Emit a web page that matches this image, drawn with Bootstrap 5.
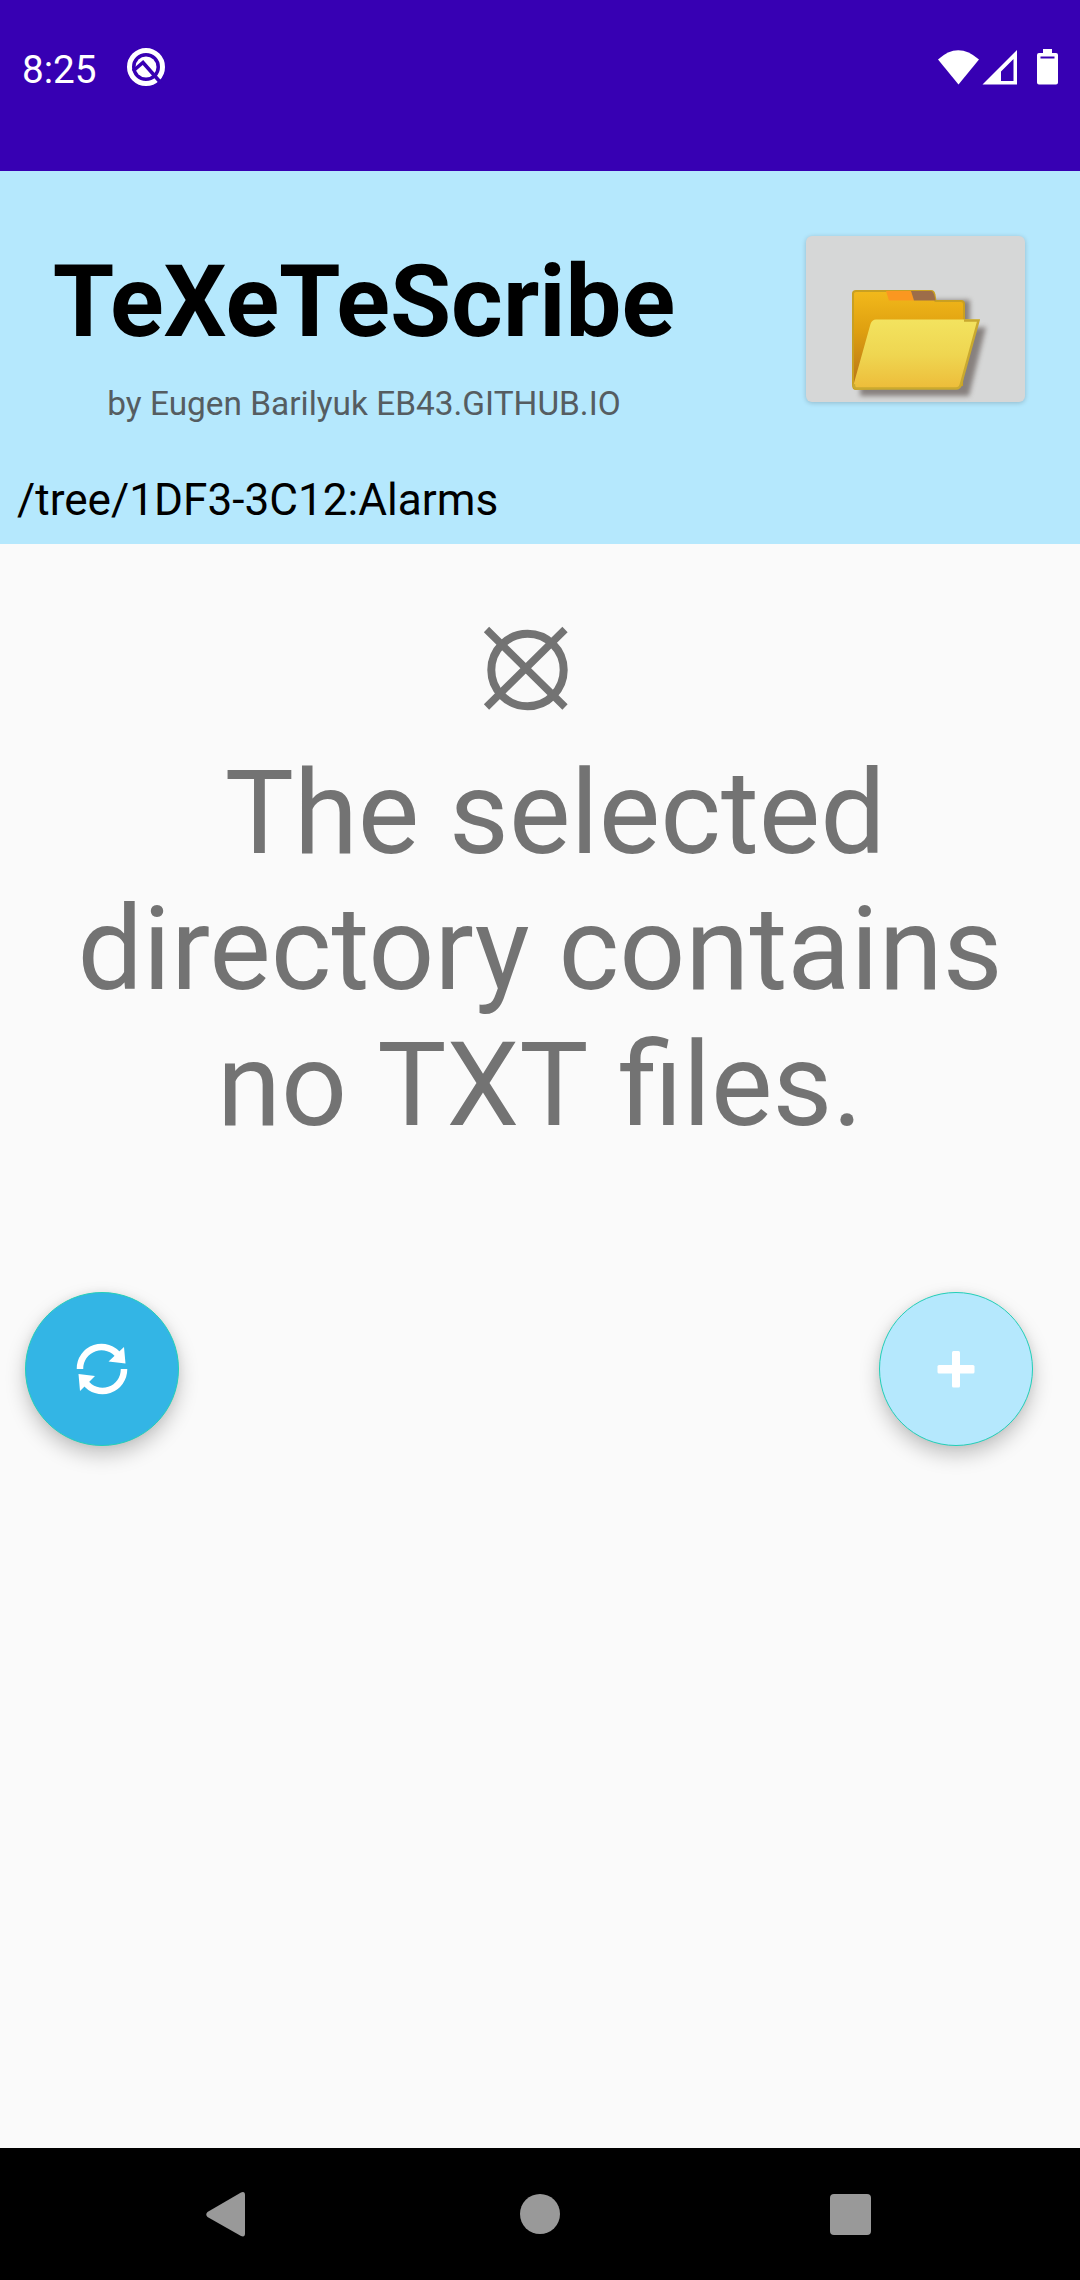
<!DOCTYPE html>
<html lang="en">
<head>
<meta charset="utf-8">
<meta name="viewport" content="width=device-width, initial-scale=1">
<title>TeXeTeScribe</title>
<link href="https://cdn.jsdelivr.net/npm/bootstrap@5.3.0/dist/css/bootstrap.min.css" rel="stylesheet">
<style>
  body { font-family: Roboto, "Noto Sans", sans-serif; background: #fafafa; color: #000; height: 2280px; overflow: hidden; }
  svg { display: block; flex: none; }
  .status-bar { height: 171px; background: #3700b3; color: #fff; padding: 35px 20px 0 22px; }
  .status-row { height: 64px; }
  .clock { font-size: 38.7px; line-height: 64px; padding-top: 5px; }
  .debug-icon { margin-left: 28px; margin-top: 2px; }
  .app-header { height: 373px; background: #b5e8fd; padding: 64px 55px 0 17px; }
  .brand { width: 694px; }
  .app-title { font-size: 99.4px; font-weight: 700; line-height: 116px; margin: 9px 0 0; white-space: nowrap; }
  .app-byline { font-size: 33.4px; line-height: 44px; margin: 22px 0 0; color: #555d61; white-space: nowrap; }
  .tree-path { font-size: 44.15px; line-height: 52px; margin: 48px 0 0; white-space: nowrap; }
  .folder-btn { width: 219px; height: 166px; margin-top: 1px; border: 0; border-radius: 6px; background: #d6d7d7; box-shadow: 0 1px 5px rgba(0,0,0,.2); }
  .empty-msg { font-size: 116px; line-height: 136px; color: #737373; white-space: pre; }
  .msg-first { padding-left: 3px; word-spacing: 1px; }
  .msg-last { word-spacing: 3.5px; }
  .fab { width: 154px; height: 154px; border-radius: 50%; border: 1px solid #22cfb8; box-shadow: 0 9px 20px rgba(0,0,0,.22), 0 0 8px rgba(0,0,0,.06); }
  .fab-refresh { background: #33b5e5; }
  .fab-add { background: #b5e8fd; }
  .fab-add svg { margin: -1px 0 0 -1px; }
  .fab-row { padding: 0 47px 0 25px; margin-top: 139px; }
  .nav-keys { height: 132px; background: #000; }
</style>
<script src="https://cdn.jsdelivr.net/npm/bootstrap@5.3.0/dist/js/bootstrap.bundle.min.js"></script>
</head>
<body class="d-flex flex-column">
<header class="status-bar">
  <div class="status-row d-flex align-items-center justify-content-between">
    <div class="d-flex align-items-center">
      <span class="clock">8:25</span>
      <svg class="debug-icon" width="42" height="42" viewBox="0 0 42 42">
        <circle cx="21" cy="20" r="16.500" fill="none" stroke="#fff" stroke-width="5"/>
        <circle cx="21" cy="20" r="10.500" fill="#fff"/>
        <path d="M8 24 18 15.500 36 36" fill="none" stroke="#3700b3" stroke-width="3.600"/>
      </svg>
    </div>
    <svg width="122" height="36" viewBox="938 49 122 36" fill="#fff">
      <path d="M938 59.500Q958 41 979 59.500L958.500 84.500Z"/>
      <path fill-rule="evenodd" d="M982.500 84.500 1017 50V84.500ZM1001 71.500V81H1013.500V59Z"/>
      <path fill-rule="evenodd" d="M1043 49h9v4h4q2 0 2 2v27.500q0 2-2 2h-17q-2 0-2-2V55q0-2 2-2h4ZM1040.500 56.500v2h14v-2Z"/>
    </svg>
  </div>
</header>

<section class="app-header">
  <div class="d-flex justify-content-between align-items-start">
    <div class="brand text-center">
      <h1 class="app-title">TeXeTeScribe</h1>
      <p class="app-byline">by Eugen Barilyuk EB43.GITHUB.IO</p>
    </div>
    <button class="folder-btn p-0" type="button" aria-label="Choose folder">
      <svg width="219" height="166" viewBox="806 236 219 166">
        <defs>
          <linearGradient id="fback" x1="0" y1="0" x2="0" y2="1"><stop offset="0" stop-color="#f2b91b"/><stop offset=".4" stop-color="#dfa010"/><stop offset="1" stop-color="#b5721a"/></linearGradient>
          <linearGradient id="ffront" x1="0" y1="0" x2="0" y2="1"><stop offset="0" stop-color="#f3e35f"/><stop offset=".5" stop-color="#efd651"/><stop offset="1" stop-color="#edbc39"/></linearGradient>
          <filter id="soft" x="-20%" y="-20%" width="140%" height="140%"><feGaussianBlur stdDeviation="2.500"/></filter>
        </defs>
        <path d="M862 300H970V328L986 327 969 396H860Z" fill="#5d5250" opacity=".65" filter="url(#soft)"/>
        <path d="M853 293.500Q853 291 856 291H931Q934 291 934.500 295L935.500 301H961Q964 301 964 304V322L962 385 856 389Q853 389 853 385Z" fill="url(#fback)" stroke="#c9a021" stroke-width="2"/>
        <path d="M886 291H911L914 300.500H889Z" fill="#fb9720"/>
        <path d="M911 291H931Q934 291 935.500 300.500H914Z" fill="#9d6d49"/>
        <path d="M870.500 324Q872 319.500 876 319.500H979L961 385Q960 389 956 389H857Q852.500 388 854 383Z" fill="url(#ffront)"/>
        <path d="M964 320.500H978.500L961 384Q960 388.500 956 388.500H857Q853.500 388.500 854 384" fill="none" stroke="#c9a92f" stroke-width="2.500"/>
      </svg>
    </button>
  </div>
  <p class="tree-path">/tree/1DF3-3C12:Alarms</p>
</section>

<main class="flex-grow-1 d-flex flex-column">
  <svg width="1080" height="201" viewBox="0 544 1080 201" fill="none" stroke="#737373">
    <circle cx="527.500" cy="670" r="36.200" stroke-width="8"/>
    <path d="M486.500 629.500 565 707M565 629.500 486.500 707" stroke-width="7.500"/>
  </svg>
  <div class="empty-msg text-center"><span class="msg-first"> The selected</span>
directory contains
<span class="msg-last">no TXT files.</span></div>
  <div class="fab-row d-flex justify-content-between">
    <button class="fab fab-refresh p-0 d-flex align-items-center justify-content-center" type="button" aria-label="Refresh">
      <svg width="52" height="52" viewBox="76 1343 52 52" fill="none" stroke="#fff" stroke-width="6.500">
        <path d="M80 1369A21.500 21.500 0 0 1 119 1356M124 1369A21.500 21.500 0 0 1 85 1382"/>
        <path fill="#fff" stroke="none" d="M124 1347 125.500 1363.500 108.500 1361.500ZM78.500 1374 95 1376 80 1391Z"/>
      </svg>
    </button>
    <button class="fab fab-add p-0 d-flex align-items-center justify-content-center" type="button" aria-label="Add">
      <svg width="38" height="38" viewBox="0 0 38 38" fill="#fff"><rect x="0.500" y="15" width="37" height="8.500" rx="1.500"/><rect x="15" y="1" width="8" height="36.500" rx="1.500"/></svg>
    </button>
  </div>
</main>

<nav class="nav-keys">
  <svg width="1080" height="132" viewBox="0 2148 1080 132" fill="#999">
    <path d="M207.500 2212 241 2192.500Q245 2191 245 2195V2233.500Q245 2237.500 241 2236L207.500 2217Q205 2214.500 207.500 2212Z"/>
    <circle cx="540" cy="2214" r="20"/>
    <rect x="830" y="2194" width="41" height="41" rx="4"/>
  </svg>
</nav>
</body>
</html>
